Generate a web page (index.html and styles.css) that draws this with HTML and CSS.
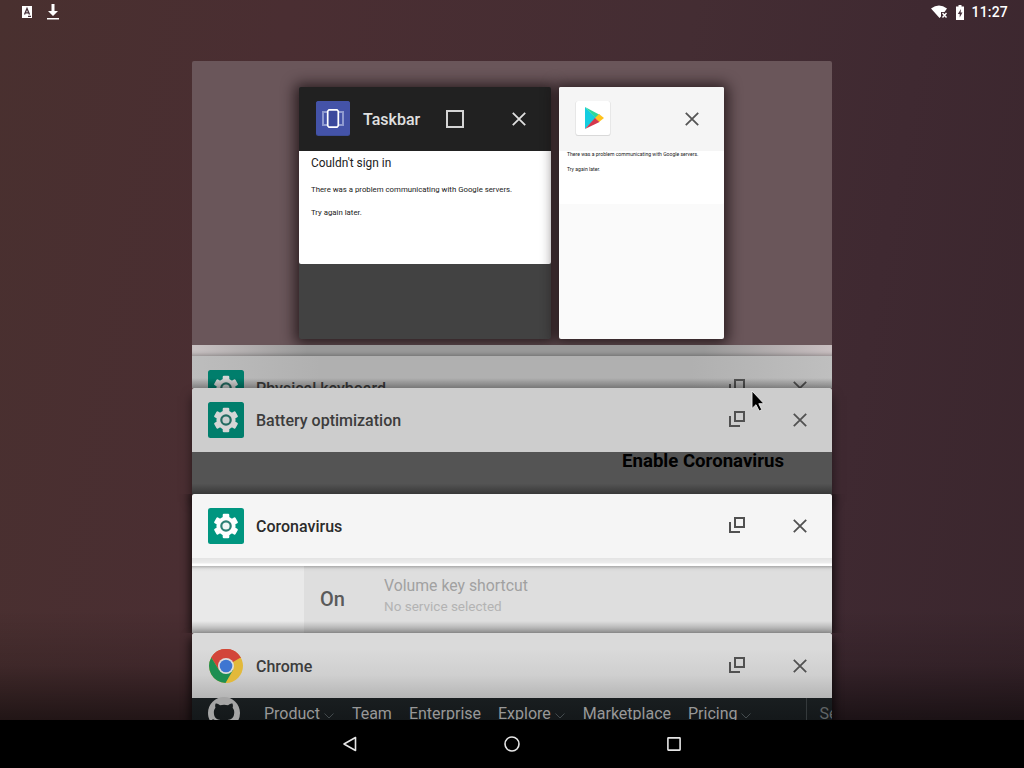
FILE: index.html
```
<!DOCTYPE html>
<html lang="en">
<head>
    <meta charset="UTF-8">
    <meta name="viewport" content="width=device-width, initial-scale=1.0">
    <title>Recent Apps</title>
    <link rel="stylesheet" href="styles.css">
</head>
<body>
    <svg class="sprite" width="0" height="0">
        <symbol id="settings" viewBox="0 0 36 36">
            <rect width="36" height="36" rx="2.5" fill="#009680"/>
            <g fill="#fff">
                <circle cx="18" cy="18" r="9.6"/>
                <rect x="14.700" y="5.700" width="6.600" height="24.600" rx="1.200"/>
                <rect x="14.700" y="5.700" width="6.600" height="24.600" rx="1.200" transform="rotate(60 18 18)"/>
                <rect x="14.700" y="5.700" width="6.600" height="24.600" rx="1.200" transform="rotate(120 18 18)"/>
            </g>
            <circle cx="18" cy="18" r="4.700" fill="#f0f7f6" stroke="#2c8075" stroke-width="2.200"/>
        </symbol>
        <symbol id="close" viewBox="0 0 14 14">
            <path d="M.8.8l12.4 12.4M13.2.8L.8 13.2" fill="none" stroke="currentColor" stroke-width="1.8"/>
        </symbol>
        <symbol id="resize" viewBox="0 0 16 16">
            <path d="M6 1h9v9H6zM1 5v10h10" fill="none" stroke="currentColor" stroke-width="2"/>
        </symbol>
        <symbol id="chevron" viewBox="0 0 10 6">
            <path d="M.5.5L5 5 9.500.5" fill="none" stroke="currentColor"/>
        </symbol>
    </svg>

    <header class="status-bar">
        <svg width="10" height="12" viewBox="0 0 10 12">
            <path fill="#fff" d="M0 0h10v12H0z"/>
            <path d="M2.500 8.500L5 2.500l2.500 6M3.300 6.800h3.400M6 10.300h3" fill="none" stroke="#46303a" stroke-width="1.300"/>
        </svg>
        <svg class="download" width="12" height="16" viewBox="0 0 12 16">
            <path fill="#fff" d="M4.500 0h3v7H11l-5 5-5-5h3.500zM0 14h12v1.500H0z"/>
        </svg>
        <svg class="wifi" width="18" height="14" viewBox="0 0 18 14">
            <path fill="#fff" d="M0 3.500Q8-2.500 16 3.500L13.500 7H10v4.500L8.500 13z"/>
            <path d="M11.500 8l4 4.500M15.500 8l-4 4.500" stroke="#fff" stroke-width="1.400"/>
        </svg>
        <svg width="8" height="15" viewBox="0 0 8 15">
            <path fill="#fff" d="M2.500 0h3v1.500H8V15H0V1.500h2.500z"/>
            <path fill="#46303a" d="M5 4L1.800 9h1.900v3.500L6.500 7.500H4.600z"/>
        </svg>
        <span class="clock">11:27</span>
    </header>

    <main class="recents">
        <section class="freeform">
            <article class="window window-dark">
                <div class="window-header">
                    <svg class="window-icon" viewBox="0 0 36 36">
                        <rect x="1" y="1" width="34" height="35" rx="2.500" fill="#3c4c96"/>
                        <rect x="1" y="1" width="34" height="34" rx="2.500" fill="#4453a8"/>
                        <path d="M12 12H8v13h4M24 12h4v13h-4" fill="none" stroke="#8f9bd0" stroke-width="2"/>
                        <path d="M14 9.800h8l1.300 1.500v14.400L22 27.200h-8l-1.300-1.500V11.300z" fill="#3b499c" stroke="#fff" stroke-width="1.700"/>
                    </svg>
                    <span class="window-title">Taskbar</span>
                    <span class="maximize"></span>
                    <svg class="close"><use href="#close"/></svg>
                </div>
                <div class="dialog">
                    <h2>Couldn't sign in</h2>
                    <p>There was a problem communicating with Google servers.</p>
                    <p>Try again later.</p>
                </div>
            </article>
            <article class="window window-light">
                <div class="window-header">
                    <svg class="window-icon" viewBox="0 0 36 36">
                        <rect x=".5" y="1" width="35" height="35" rx="2.500" fill="#d9d9d9"/>
                        <rect x="1" y="1" width="34" height="34" rx="2" fill="#fff"/>
                        <path fill="#14cde0" d="M10 7v22l11-11z"/>
                        <path fill="#2cd79b" d="M10 7l15 8-4 3.500z"/>
                        <path fill="#ffc21c" d="M24 14l5 4-5 4-4-4z"/>
                        <path fill="#d5384d" d="M10 29l10-11 4.500 4z"/>
                    </svg>
                    <svg class="close"><use href="#close"/></svg>
                </div>
                <div class="dialog dialog-small">
                    <p>There was a problem communicating with Google servers.</p>
                    <p>Try again later.</p>
                </div>
            </article>
        </section>

        <section class="task task-edge"></section>

        <section class="task task-keyboard">
            <div class="task-header">
                <svg class="task-icon"><use href="#settings"/></svg>
                <span class="task-title">Physical keyboard</span>
                <svg class="resize"><use href="#resize"/></svg>
                <svg class="close"><use href="#close"/></svg>
            </div>
        </section>

        <section class="task task-battery">
            <div class="task-header">
                <svg class="task-icon"><use href="#settings"/></svg>
                <span class="task-title">Battery optimization</span>
                <svg class="resize"><use href="#resize"/></svg>
                <svg class="close"><use href="#close"/></svg>
            </div>
            <div class="battery-body">Enable Coronavirus</div>
        </section>

        <section class="task task-corona">
            <div class="task-header">
                <svg class="task-icon"><use href="#settings"/></svg>
                <span class="task-title">Coronavirus</span>
                <svg class="resize"><use href="#resize"/></svg>
                <svg class="close"><use href="#close"/></svg>
            </div>
            <div class="corona-edge"></div>
            <div class="corona-body">
                <div class="side-panel"></div>
                <div class="state">On</div>
                <div class="setting">
                    <div class="setting-name">Volume key shortcut</div>
                    <div class="setting-value">No service selected</div>
                </div>
            </div>
        </section>

        <section class="task task-chrome">
            <div class="task-header">
                <svg class="task-icon" viewBox="0 0 36 36">
                    <circle cx="18" cy="18" r="17" fill="#e2b93b"/>
                    <path fill="#d2453a" d="M18 18L3.300 9.500A17 17 0 0 1 32.700 9.500z"/>
                    <path fill="#d2453a" d="M18 10h14.900A17 17 0 0 0 3.300 9.500L11 22z"/>
                    <path fill="#1e8f52" d="M3.300 9.500A17 17 0 0 0 17.500 35L25 22 18 18l-7 4z"/>
                    <circle cx="18" cy="18" r="8" fill="#dedede"/>
                    <circle cx="18" cy="18" r="6.300" fill="#3e76d1"/>
                </svg>
                <span class="task-title">Chrome</span>
                <svg class="resize"><use href="#resize"/></svg>
                <svg class="close"><use href="#close"/></svg>
            </div>
            <div class="site-nav">
                <svg class="octocat" viewBox="0 0 16 16">
                    <path fill="currentColor" d="M8 0C3.580 0 0 3.580 0 8c0 3.540 2.290 6.530 5.470 7.590.4.070.55-.17.55-.38 0-.19-.01-.82-.01-1.490-2.010.37-2.530-.49-2.690-.94-.09-.23-.48-.94-.82-1.130-.28-.15-.68-.52-.01-.53.63-.01 1.080.58 1.230.82.72 1.210 1.870.87 2.330.66.07-.52.28-.87.51-1.070-1.780-.2-3.640-.89-3.640-3.950 0-.87.31-1.590.82-2.150-.08-.2-.36-1.020.08-2.120 0 0 .67-.21 2.200.82.64-.18 1.320-.27 2-.27.68 0 1.360.09 2 .27 1.530-1.040 2.200-.82 2.200-.82.44 1.100.16 1.920.08 2.120.51.56.82 1.270.82 2.150 0 3.070-1.870 3.750-3.650 3.950.29.25.54.73.54 1.480 0 1.070-.01 1.930-.01 2.200 0 .21.15.46.55.38A8.013 8.013 0 0 0 16 8c0-4.420-3.580-8-8-8z"/>
                </svg>
                <span class="has-menu">Product <svg class="chevron"><use href="#chevron"/></svg></span>
                <span>Team</span>
                <span>Enterprise</span>
                <span class="has-menu">Explore <svg class="chevron"><use href="#chevron"/></svg></span>
                <span>Marketplace</span>
                <span class="has-menu">Pricing <svg class="chevron"><use href="#chevron"/></svg></span>
                <span class="search">Search</span>
            </div>
        </section>
    </main>

    <nav class="nav-bar">
        <svg width="16" height="16" viewBox="0 0 16 16"><path d="M13.500 1.500v13L2 8z" fill="none" stroke="#e6e6e6" stroke-width="1.600" stroke-linejoin="round"/></svg>
        <svg width="16" height="16" viewBox="0 0 16 16"><circle cx="8" cy="8" r="7" fill="none" stroke="#e6e6e6" stroke-width="1.600"/></svg>
        <svg width="16" height="16" viewBox="0 0 16 16"><rect x="1.900" y="1.900" width="12.200" height="12.200" rx=".5" fill="none" stroke="#e6e6e6" stroke-width="1.600"/></svg>
    </nav>

    <svg class="cursor" width="16" height="24" viewBox="0 0 16 24">
        <path d="M1 1v17.500l4-3.800 3.200 6.300 2.600-1.300-3-6H13z" fill="#000" stroke="#eee" stroke-width=".9"/>
    </svg>
</body>
</html>
```
FILE: styles.css
```
* {
    box-sizing: border-box;
}
body {
    margin: 0;
    width: 1024px;
    height: 768px;
    overflow: hidden;
    display: flex;
    flex-direction: column;
    font-family: Roboto, "Liberation Sans", sans-serif;
    background:
        linear-gradient(to bottom, transparent 610px, rgba(0,0,0,0.15) 665px, rgba(0,0,0,0.55) 720px),
        linear-gradient(100deg, #49302f 0%, #4a2e32 25%, #442d33 60%, #3f2931 80%, #3a262d 100%);
}
.sprite {
    position: absolute;
}
.status-bar {
    height: 24px;
    flex: none;
    display: flex;
    align-items: center;
    padding: 0 16px 0 22px;
    color: #fff;
}
.download {
    margin-left: 15px;
}
.wifi {
    margin-left: auto;
    margin-right: 7px;
}
.clock {
    margin-left: 7px;
    font-size: 14px;
    font-weight: 500;
    letter-spacing: 0.2px;
}

/* Stack of recent tasks */
.recents {
    width: 640px;
    height: 659px;
    margin: 37px auto 0;
    flex: none;
}
.freeform {
    height: 284px;
    padding: 26px 107px 0;
    display: flex;
    gap: 8px;
    border-radius: 2px 2px 0 0;
    background-color: #6a565a;
}
.window {
    height: 252px;
    position: relative;
    border-radius: 2px;
    box-shadow: 0 1px 14px 4px rgba(20,10,12,0.75);
}
.window-dark {
    width: 252px;
    background-color: #424242;
    color: #e0e0e0;
}
.window-light {
    width: 165px;
    background-color: #fafafa;
    color: #555;
}
.window-header {
    height: 64px;
    display: flex;
    align-items: center;
    padding: 0 25px 0 16px;
    border-radius: 2px 2px 0 0;
    background-color: #212121;
}
.window-light .window-header {
    background-color: #f5f5f5;
}
.window-icon {
    width: 36px;
    height: 36px;
    margin-bottom: 2px;
}
.window-title {
    width: 83px;
    margin-left: 12px;
    font-size: 16px;
    font-weight: 500;
}
.maximize {
    width: 18px;
    height: 18px;
    border: 2px solid #d4d4d4;
}
.close {
    width: 14px;
    height: 14px;
    margin-left: auto;
}
.dialog {
    height: 113px;
    padding: 5px 12px;
    border-radius: 0 0 2px 2px;
    background-color: #fff;
    color: #212121;
    white-space: nowrap;
}
.dialog h2 {
    margin: 0 0 14px;
    font-size: 11.9px;
    line-height: 14px;
    font-weight: 400;
}
.dialog p {
    margin: 0 0 11px;
    font-size: 7.8px;
    line-height: 12px;
}
.dialog-small {
    height: 53px;
    padding: 0 8px;
}
.dialog-small p {
    margin: 0 0 9px;
    font-size: 5.1px;
    line-height: 6px;
}

.task {
    position: relative;
    color: #515151;
}
.task-header {
    height: 64px;
    display: flex;
    align-items: center;
    padding: 0 25px 0 16px;
}
.task-icon {
    width: 36px;
    height: 36px;
}
.task-title {
    margin-left: 12px;
    font-size: 16px;
    font-weight: 500;
    color: #3c3c3c;
}
.resize {
    width: 16px;
    height: 16px;
    margin-left: auto;
    margin-right: 48px;
    position: relative;
    top: -1px;
}
.task .close {
    margin-left: 0;
}
.task-edge {
    height: 11px;
    background: linear-gradient(to right, #c9c2c3, #999 18%, #999 80%, #c9bfc1);
    box-shadow: inset 0 -4px 4px -3px rgba(0,0,0,0.3);
}
.task-keyboard {
    height: 32px;
    overflow: hidden;
    background: linear-gradient(to right, #bdbdbd, #b0b0b0 20%, #b0b0b0 78%, #bfbfbf);
}
.task-keyboard .task-icon,
.task-battery .task-icon {
    filter: brightness(0.84);
}
.task-keyboard::after {
    content: "";
    position: absolute;
    inset: 22px 0 0;
    background: linear-gradient(to bottom, transparent, rgba(0,0,0,0.3));
}
.task-battery {
    box-shadow: 0 8px 10px rgba(0,0,0,0.5);
}
.task-battery .task-header {
    background-color: #cdcdcd;
    border-radius: 2px 2px 0 0;
}
.battery-body {
    height: 42px;
    padding-right: 48px;
    background: linear-gradient(to bottom, #545454 75%, #383838);
    color: #000;
    font-size: 18.6px;
    line-height: 18px;
    font-weight: 700;
    text-align: right;
}
.task-corona {
    background-color: #f5f5f5;
    border-radius: 2px 2px 0 0;
    box-shadow: 0 0 10px 2px rgba(0,0,0,0.7);
    clip-path: inset(0 -20px);
}
.task-corona .task-title {
    color: #2b2b2b;
}
.corona-edge {
    height: 8px;
    background: linear-gradient(to bottom, #e3e3e3, #ededed 5px, #fff 6px);
}
.corona-body {
    height: 67px;
    display: flex;
    position: relative;
    background: linear-gradient(to bottom, #aaa, #d8d8d8 3px, #dedede 6px, #dedede);
}
.corona-body::after {
    content: "";
    position: absolute;
    inset: 55px 0 0;
    background: linear-gradient(to bottom, transparent, rgba(0,0,0,0.3));
}
.side-panel {
    width: 112px;
    background: linear-gradient(to bottom, #b5b5b5, #e2e2e2 3px, #e9e9e9 6px, #e9e9e9);
}
.state {
    width: 80px;
    padding: 21px 0 0 16px;
    font-size: 20px;
    line-height: 24px;
    font-weight: 500;
    color: #5a5a5a;
}
.setting-name {
    margin-top: 10px;
    font-size: 15.8px;
    line-height: 20px;
    color: #a1a1a1;
}
.setting-value {
    font-size: 13.5px;
    line-height: 20px;
    color: #b3b3b3;
}
.task-chrome {
    height: 87px;
    overflow: hidden;
    border-radius: 2px 2px 0 0;
    box-shadow: 0 6px 10px 2px rgba(0,0,0,0.7);
}
.task-chrome .task-header {
    height: 65px;
    padding-bottom: 1px;
    padding-top: 2px;
    background: linear-gradient(to bottom, #dadada 25%, #cfcfcf 65%, #b5b5b5);
}
.site-nav {
    height: 22px;
    display: flex;
    padding-left: 16px;
    background: linear-gradient(to bottom, #191e20, #14181a);
    color: #989898;
    font-size: 16px;
    line-height: 31px;
    white-space: nowrap;
}
.site-nav span {
    flex: none;
    margin-right: 17px;
}
.site-nav .has-menu {
    margin-right: 18px;
}
.octocat {
    flex: none;
    width: 32px;
    height: 32px;
    margin: -1px 24px 0 0;
    color: #a5a5a5;
}
.chevron {
    width: 10px;
    height: 6px;
    color: #434a4d;
}
.site-nav .search {
    height: 22px;
    margin: 0 0 0 37px;
    padding-left: 12px;
    border-left: 1px solid #34393b;
    color: #606466;
}

.nav-bar {
    height: 48px;
    flex: none;
    position: relative;
    display: flex;
    align-items: center;
    justify-content: center;
    gap: 146px;
    background-color: #000;
}
.cursor {
    position: absolute;
    left: 751px;
    top: 390px;
}
```
